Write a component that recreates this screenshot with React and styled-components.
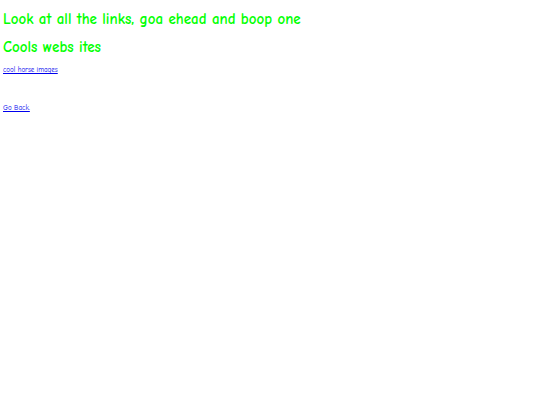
import React from "react";
import styled, { createGlobalStyle } from "styled-components";

const Global = createGlobalStyle`
  html, body { margin: 0; padding: 0; background: #ffffff; }
  body { font-family: "Comic Sans MS", "Comic Neue", "Open Sans", "DejaVu Sans", sans-serif; }
`;

const Page = styled.div`
  padding: 0 3px;
  display: flex;
  flex-direction: column;
  align-items: flex-start;
`;

const Heading = styled.h1`
  margin: ${(p) => p.$mt}px 0 0;
  font-size: 15px;
  line-height: 18px;
  font-weight: 700;
  color: #00ff00;
`;

const Link = styled.a`
  margin-top: ${(p) => p.$mt}px;
  font-size: 7px;
  line-height: 10px;
  color: #0000ee;
  text-decoration: underline;
`;

export default function App() {
  return (
    <>
      <Global />
      <Page>
        <Heading $mt={10}>Look at all the links, goa ehead and boop one</Heading>
        <Heading $mt={10}>Cools webs ites</Heading>
        <Link href="#" $mt={9}>cool horse images</Link>
        <Link href="#" $mt={28}>Go Back.</Link>
      </Page>
    </>
  );
}
